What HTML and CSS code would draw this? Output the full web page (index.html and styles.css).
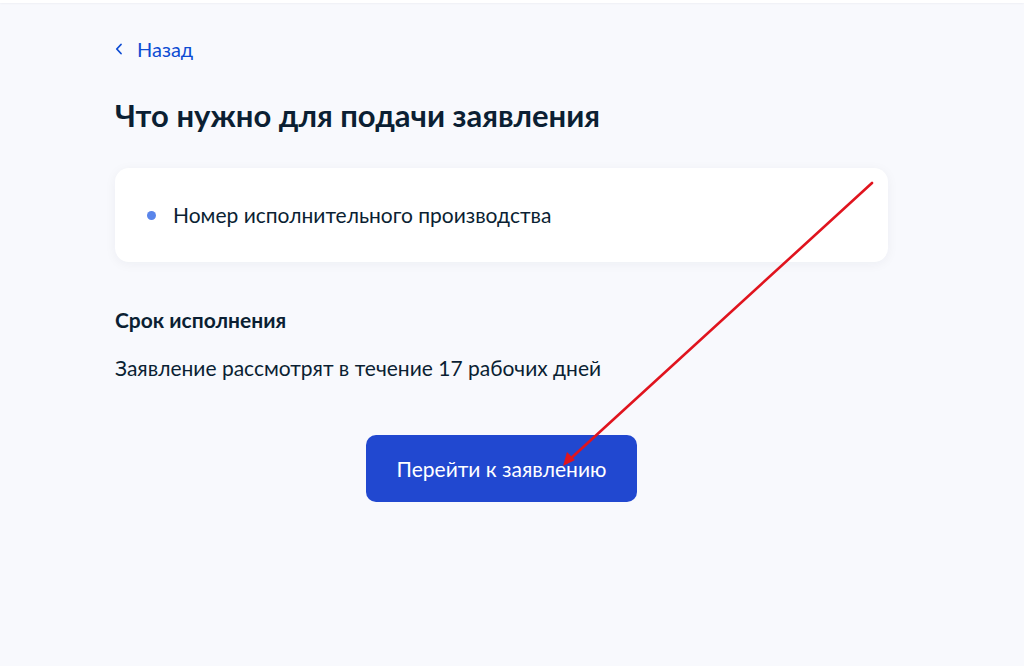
FILE: index.html
```html
<!DOCTYPE html>
<html lang="ru">
<head>
    <meta charset="UTF-8">
    <meta name="viewport" content="width=device-width, initial-scale=1.0">
    <title>Что нужно для подачи заявления</title>
    <link rel="stylesheet" href="styles.css">
</head>
<body>
    <div class="top-line"></div>
    <main class="page">
        <a class="back-link" href="#">
            <svg class="back-icon" width="8" height="12" viewBox="0 0 8 12"><path d="M6 1.5 L1.8 6 L6 10.5" fill="none" stroke="#0d4cd3" stroke-width="1.8" stroke-linecap="round" stroke-linejoin="round"/></svg>
            <span>Назад</span>
        </a>
        <h1 class="title">Что нужно для подачи заявления</h1>
        <div class="card">
            <ul class="doc-list">
                <li>Номер исполнительного производства</li>
            </ul>
        </div>
        <h3 class="subtitle">Срок исполнения</h3>
        <p class="text">Заявление рассмотрят в течение 17 рабочих дней</p>
        <div class="actions">
            <button class="main-button">Перейти к заявлению</button>
        </div>
    </main>
    <svg class="annotation" width="1024" height="666" viewBox="0 0 1024 666">
        <line x1="872" y1="183" x2="568" y2="461" stroke="#e0141e" stroke-width="2.6" stroke-linecap="round"/>
        <path d="M563 466 L567 452 L575 460 Z" fill="#e0141e"/>
    </svg>
</body>
</html>
```

FILE: styles.css
```css
body {
    margin: 0;
    background-color: #f8f9fd;
    font-family: Lato, "Noto Sans", sans-serif;
    color: #0b1f33;
}

.top-line {
    height: 3px;
    background-color: #ffffff;
    box-shadow: 0 1px 2px rgba(11, 31, 51, 0.04);
}

.page {
    width: 773px;
    margin-left: 115px;
    padding-top: 34px;
}

.back-link {
    display: inline-flex;
    align-items: center;
    gap: 14px;
    color: #0d4cd3;
    text-decoration: none;
    font-size: 20px;
    line-height: 24px;
}

.title {
    margin: 36px 0 0;
    font-size: 31px;
    line-height: 36px;
    font-weight: 700;
}

.card {
    margin-top: 35px;
    background-color: #ffffff;
    border-radius: 14px;
    box-shadow: 0 2px 12px rgba(11, 31, 51, 0.05);
    padding: 35px 32px;
}

.doc-list {
    list-style: none;
    margin: 0;
    padding: 0;
}

.doc-list li {
    position: relative;
    padding-left: 26px;
    font-size: 21px;
    line-height: 24px;
}

.doc-list li::before {
    content: "";
    position: absolute;
    left: 0;
    top: 8px;
    width: 9px;
    height: 9px;
    border-radius: 50%;
    background-color: #5a85ea;
}

.subtitle {
    margin: 46px 0 0;
    font-size: 21px;
    line-height: 24px;
    font-weight: 700;
}

.text {
    margin: 24px 0 0;
    font-size: 21px;
    line-height: 24px;
}

.actions {
    display: flex;
    justify-content: center;
    margin-top: 55px;
}

.main-button {
    width: 271px;
    height: 67px;
    border: none;
    border-radius: 10px;
    background-color: #2148d0;
    color: #ffffff;
    font-family: inherit;
    font-size: 21px;
    cursor: pointer;
}

.annotation {
    position: absolute;
    left: 0;
    top: 0;
    pointer-events: none;
}
```
